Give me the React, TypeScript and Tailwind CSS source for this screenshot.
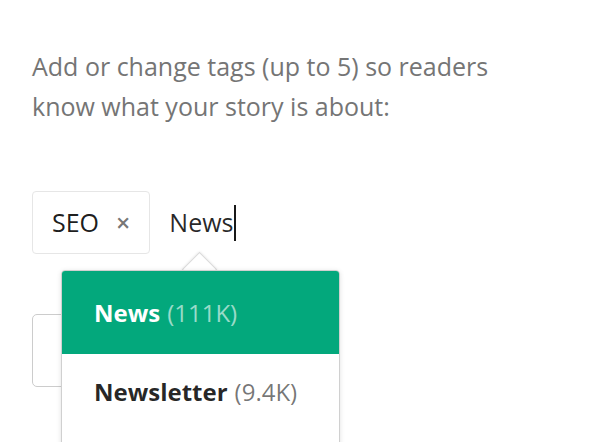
const App = () => {
    return (
        <div className="h-[442px] w-[602px] overflow-hidden bg-white pl-8 pt-[46px] font-['Open_Sans','Liberation_Sans',sans-serif]">
            <p className="w-[520px] text-[25px] leading-[40px] text-[#757575]">
                Add or change tags (up to 5) so readers know what your story is about:
            </p>

            <div className="relative mt-[65px] flex items-center">
                <div className="flex h-[63px] items-center rounded-[4px] border border-[#e6e6e6] pl-[19px] pr-[19px]">
                    <span className="text-[25px] text-black/90">SEO</span>
                    <span className="ml-[17px] text-[25px] font-semibold leading-none text-black/55">×</span>
                </div>
                <div className="ml-[19px] flex items-center">
                    <span className="text-[25px] text-black/85">News</span>
                    <span className="h-[36px] w-[2px] bg-black/90" />
                </div>

                {/* suggestion popover */}
                <div className="absolute left-[29px] top-[79px] z-10 w-[279px]">
                    <div className="absolute left-[126px] top-[-13px] h-[25px] w-[25px] rotate-45 border border-[#dadada] bg-white shadow-[0_0_3px_rgba(0,0,0,0.12)]" />
                    <ul className="relative overflow-hidden rounded-t-[4px] border border-[#d0d0d0] bg-white shadow-[0_1px_5px_rgba(0,0,0,0.12)]">
                        <li className="flex h-[83px] items-center bg-[#03a87c] pl-8 text-[24px]">
                            <span className="font-bold text-white">News</span>
                            <span className="ml-[7px] text-white/60">(111K)</span>
                        </li>
                        <li className="flex h-[80px] items-start pl-8 pt-[20px] text-[24px]">
                            <span className="font-bold text-black/85">Newsletter</span>
                            <span className="ml-[7px] text-black/55">(9.4K)</span>
                        </li>
                        <li className="h-[40px]" />
                    </ul>
                </div>
            </div>

            <button className="mt-[60px] h-[73px] w-[220px] rounded-[5px] border border-[#cccccc] bg-white text-[20px] text-black/55">
                Publish now
            </button>
        </div>
    )
}

export default App
